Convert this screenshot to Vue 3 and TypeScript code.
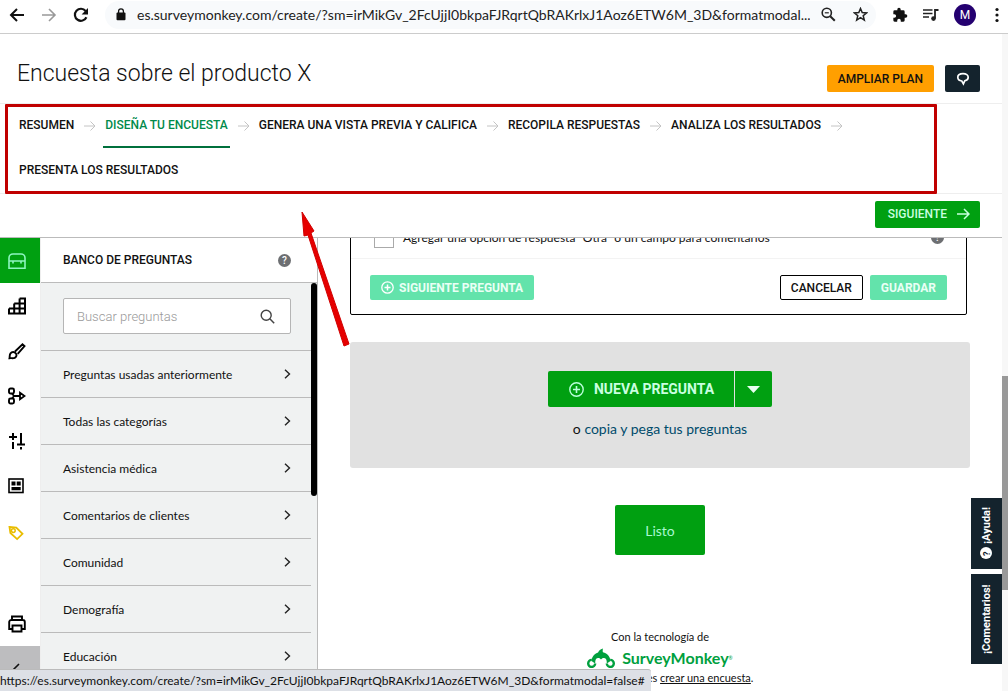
<script setup lang="ts">
import { ref } from 'vue'

interface Step {
  label: string
  active?: boolean
}

const url = 'es.surveymonkey.com/create/?sm=irMikGv_2FcUjjI0bkpaFJRqrtQbRAKrlxJ1Aoz6ETW6M_3D&formatmodal...'
const statusUrl =
  'https://es.surveymonkey.com/create/?sm=irMikGv_2FcUjjI0bkpaFJRqrtQbRAKrlxJ1Aoz6ETW6M_3D&formatmodal=false#'

const steps: Step[] = [
  { label: 'RESUMEN' },
  { label: 'DISEÑA TU ENCUESTA', active: true },
  { label: 'GENERA UNA VISTA PREVIA Y CALIFICA' },
  { label: 'RECOPILA RESPUESTAS' },
  { label: 'ANALIZA LOS RESULTADOS' },
  { label: 'PRESENTA LOS RESULTADOS' },
]

const categories: string[] = [
  'Preguntas usadas anteriormente',
  'Todas las categorías',
  'Asistencia médica',
  'Comentarios de clientes',
  'Comunidad',
  'Demografía',
  'Educación',
]

const search = ref('')
const other = ref(false)
</script>

<template>
  <div class="window">
    <header class="browser">
      <button class="icon-btn" aria-label="Atrás">
        <svg width="16" height="16" viewBox="0 0 16 16"><path d="M15 8H2M8 2L2 8l6 6" fill="none" stroke="#111" stroke-width="2" /></svg>
      </button>
      <button class="icon-btn" aria-label="Adelante">
        <svg width="16" height="16" viewBox="0 0 16 16"><path d="M1 8h13M8 2l6 6-6 6" fill="none" stroke="#999" stroke-width="1.6" /></svg>
      </button>
      <button class="icon-btn" aria-label="Recargar">
        <svg width="16" height="16" viewBox="0 0 16 16">
          <path d="M13.4 10.2A6 6 0 1 1 12.6 4" fill="none" stroke="#111" stroke-width="2.2" />
          <path d="M15 1v6.4H8.6z" fill="#111" />
        </svg>
      </button>
      <div class="address">
        <svg width="10" height="13" viewBox="0 0 10 13">
          <rect x="0.5" y="4.6" width="9" height="7.6" rx="1" fill="#111" />
          <path d="M2.6 5V3.2a2.4 2.4 0 0 1 4.8 0V5" fill="none" stroke="#111" stroke-width="1.3" />
        </svg>
        <span class="url">{{ url }}</span>
        <svg class="zoom" width="15" height="15" viewBox="0 0 15 15">
          <circle cx="5.8" cy="5.8" r="4.6" fill="none" stroke="#222" stroke-width="1.6" />
          <path d="M9.2 9.2l4.6 4.6" stroke="#222" stroke-width="2" />
          <path d="M3.8 5.8h4" stroke="#222" stroke-width="1.2" />
        </svg>
        <svg class="star" width="15" height="15" viewBox="0 0 15 15">
          <path d="M7.5 1.5l1.7 4.1 4.4.3-3.4 2.9 1.1 4.3-3.8-2.4-3.8 2.4 1.1-4.3L1.4 5.9l4.4-.3z" fill="none" stroke="#222" stroke-width="1.5" />
        </svg>
      </div>
      <div class="tools">
        <svg width="16" height="16" viewBox="0 0 24 24">
          <path d="M20.5 11H19V7a2 2 0 0 0-2-2h-4V3.500a2.500 2.500 0 0 0-5 0V5H4a2 2 0 0 0-2 2v3.800h1.500a2.700 2.700 0 0 1 0 5.400H2V20a2 2 0 0 0 2 2h3.800v-1.500a2.700 2.700 0 0 1 5.400 0V22H17a2 2 0 0 0 2-2v-4h1.500a2.500 2.500 0 0 0 0-5z" fill="#111" />
        </svg>
        <svg width="16" height="14" viewBox="0 0 16 14">
          <path d="M0 2h9.500M0 5.500h9.500M0 9h6" stroke="#222" stroke-width="1.6" />
          <path d="M12 10.500V2h3.500" fill="none" stroke="#222" stroke-width="1.8" />
          <circle cx="10.500" cy="10.600" r="2.300" fill="#222" />
        </svg>
        <span class="avatar">M</span>
        <svg class="dots" width="4" height="16" viewBox="0 0 4 16"><g fill="#111"><circle cx="2" cy="2.500" r="1.600" /><circle cx="2" cy="8" r="1.600" /><circle cx="2" cy="13.500" r="1.600" /></g></svg>
      </div>
    </header>

    <div class="page">
      <div class="app">
        <div class="title-row">
          <h1>Encuesta sobre el producto X</h1>
          <div class="title-actions">
            <button class="upgrade">AMPLIAR PLAN</button>
            <button class="chat" aria-label="Comentarios">
              <svg width="14" height="14" viewBox="0 0 14 14">
                <path d="M7 1.600c-3.200 0-5.200 1.400-5.200 3.700 0 2.200 1.800 3.500 4 3.700l1.600 2.800 1.300-2.900c2.100-.4 3.500-1.600 3.500-3.600 0-2.300-2-3.700-5.200-3.700z" fill="none" stroke="#fff" stroke-width="1.700" />
              </svg>
            </button>
          </div>
        </div>

        <nav class="steps">
          <template v-for="(step, i) in steps" :key="step.label">
            <a href="#" class="step" :class="{ active: step.active }">{{ step.label }}</a>
            <svg v-if="i < steps.length - 1" class="step-arrow" width="12" height="10" viewBox="0 0 12 10">
              <path d="M0 5h11M6.500 0.500L11 5 6.500 9.500" fill="none" stroke="#c4c4c4" stroke-width="1" />
            </svg>
          </template>
        </nav>

        <div class="next-row">
          <button class="next">
            SIGUIENTE
            <svg width="13" height="12" viewBox="0 0 13 12"><path d="M0 6h12M7 1l5 5-5 5" fill="none" stroke="#c9ffe0" stroke-width="1.500" /></svg>
          </button>
        </div>

        <div class="workspace">
          <aside class="rail">
            <button class="rail-item on" aria-label="Banco de preguntas">
              <svg width="18" height="18" viewBox="0 0 18 18"><path d="M1 16.200V6a4 4 0 0 1 4-4h8a4 4 0 0 1 4 4v10.200zM1 9h16M5 9v2.500M13 9v2.500" fill="none" stroke="#8df5c0" stroke-width="1.600" /></svg>
            </button>
            <button class="rail-item" aria-label="Generador">
              <svg width="18" height="18" viewBox="0 0 18 18"><path d="M1 11.500h16M6.200 6.500H17M11.600 1.500H17v15H1v-5M6.200 16.500v-10M11.600 16.500v-15" fill="none" stroke="#000" stroke-width="2" /></svg>
            </button>
            <button class="rail-item" aria-label="Apariencia">
              <svg width="18" height="18" viewBox="0 0 18 18">
                <path d="M7 9.500l7.500-7.300 2 1.800-6.800 7.800M1.500 16.200c.4-1.600-.2-3.400 1-4.900 1.300-1.700 4-1.700 5.300 0 1.300 1.500.8 3.600-1 4.500-1.400.7-3.400.2-5.300.4z" fill="none" stroke="#000" stroke-width="1.900" />
              </svg>
            </button>
            <button class="rail-item" aria-label="Lógica">
              <svg width="18" height="18" viewBox="0 0 18 18">
                <rect x="1" y="1.500" width="5" height="5" rx="1.500" fill="none" stroke="#000" stroke-width="1.900" />
                <rect x="1" y="11.500" width="5" height="5" rx="1.500" fill="none" stroke="#000" stroke-width="1.900" />
                <path d="M4 6.500L6 9l-2 2.500M6 9h6M12 5.800L16.500 9 12 12.200z" fill="none" stroke="#000" stroke-width="1.800" />
              </svg>
            </button>
            <button class="rail-item" aria-label="Opciones">
              <svg width="18" height="18" viewBox="0 0 18 18"><path d="M5 1v7M1 5h8M5 10v7M13 1v12M9 12.500h8M13 15v2.500" fill="none" stroke="#000" stroke-width="2" /></svg>
            </button>
            <button class="rail-item" aria-label="Formato">
              <svg width="16" height="16" viewBox="0 0 16 16">
                <rect x="1" y="1" width="14" height="13.500" fill="none" stroke="#000" stroke-width="1.600" />
                <path d="M3.500 3.500h4v4h-4zM8.700 3.500h4v4h-4zM3.500 9h9.200v3.200H3.500z" fill="#000" />
              </svg>
            </button>
            <button class="rail-item tag" aria-label="Etiquetas">
              <svg width="16" height="16" viewBox="0 0 16 16">
                <path d="M1.500 2l6.800.6 6.200 6.200-5.400 5.300L2.400 8z" fill="none" stroke="#e9bd00" stroke-width="1.800" />
                <circle cx="5.300" cy="5.600" r="1.900" fill="none" stroke="#e9bd00" stroke-width="1.500" />
              </svg>
            </button>
            <div class="rail-foot">
              <button class="rail-item" aria-label="Imprimir">
                <svg width="18" height="18" viewBox="0 0 18 18">
                  <path d="M4 5V1.500h10V5M4 14H1.200V7a2 2 0 0 1 2-2h11.600a2 2 0 0 1 2 2v7H14M4.500 10.500h9v6h-9z" fill="none" stroke="#000" stroke-width="1.900" />
                </svg>
              </button>
              <button class="rail-item collapse" aria-label="Contraer">
                <svg width="8" height="12" viewBox="0 0 8 12"><path d="M7 1L2 6l5 5" fill="none" stroke="#111" stroke-width="1.600" /></svg>
              </button>
            </div>
          </aside>

          <section class="bank">
            <div class="bank-head">
              <h2>BANCO DE PREGUNTAS</h2>
              <span class="help">?</span>
            </div>
            <div class="bank-scroll">
              <div class="bank-body">
                <div class="search-wrap">
                  <label class="search">
                    <input v-model="search" type="text" placeholder="Buscar preguntas" aria-label="Buscar preguntas" />
                    <svg width="15" height="15" viewBox="0 0 15 15">
                      <circle cx="6.200" cy="6.200" r="5" fill="none" stroke="#444" stroke-width="1.400" />
                      <path d="M9.800 9.800l4.400 4.400" stroke="#444" stroke-width="1.500" />
                    </svg>
                  </label>
                </div>
                <button v-for="c in categories" :key="c" class="category">
                  <span>{{ c }}</span>
                  <svg width="7" height="10" viewBox="0 0 7 10"><path d="M1 0.700L5.500 5 1 9.300" fill="none" stroke="#222" stroke-width="1.400" /></svg>
                </button>
              </div>
              <div class="bank-track"><div class="bank-thumb"></div></div>
            </div>
          </section>

          <main class="canvas">
            <section class="editor">
              <div class="option">
                <input id="other" v-model="other" type="checkbox" />
                <label for="other">Agregar una opción de respuesta "Otra" o un campo para comentarios</label>
                <span class="help">?</span>
              </div>
              <div class="editor-actions">
                <button class="mint next-question">
                  <svg width="13" height="13" viewBox="0 0 13 13"><circle cx="6.500" cy="6.500" r="5.700" fill="none" stroke="#fff" stroke-width="1.300" /><path d="M6.500 3.500v6M3.500 6.500h6" stroke="#fff" stroke-width="1.500" /></svg>
                  SIGUIENTE PREGUNTA
                </button>
                <button class="cancel">CANCELAR</button>
                <button class="mint save">GUARDAR</button>
              </div>
            </section>

            <section class="adder">
              <div class="split">
                <button class="new-question">
                  <svg width="15" height="15" viewBox="0 0 15 15"><circle cx="7.500" cy="7.500" r="6.700" fill="none" stroke="#b9ffdc" stroke-width="1.400" /><path d="M7.500 4v7M4 7.500h7" stroke="#b9ffdc" stroke-width="1.600" /></svg>
                  NUEVA PREGUNTA
                </button>
                <button class="more" aria-label="Más tipos de pregunta">
                  <svg width="13" height="7" viewBox="0 0 13 7"><path d="M0 0h13L6.500 7z" fill="#e8fff2" /></svg>
                </button>
              </div>
              <p>o <a href="#">copia y pega tus preguntas</a></p>
            </section>

            <button class="done">Listo</button>

            <footer class="powered">
              <span>Con la tecnología de</span>
              <div class="brand">
                <svg width="28" height="20" viewBox="0 0 28 20">
                  <path d="M4.500 13C5 7.500 9 4 14 4s9 3.500 9.500 9l-3.700 2.500c.2-3.700-1-5.500-3-5.500-1.300 0-2.200.6-2.800 1.600C13.400 10.600 12.500 10 11.200 10c-2 0-3.200 1.800-3 5.500z" fill="#00a03e" />
                  <path d="M8.200 15.500a3.500 3.500 0 1 1-3.400-3.600M19.800 15.500a3.500 3.500 0 1 0 3.400-3.600" fill="none" stroke="#00a03e" stroke-width="2.400" />
                  <path d="M11 5c.6-2.400 2-3.600 5-4.500-.4 1.400-.4 2.600 0 4.500z" fill="#00a03e" />
                </svg>
                <strong>SurveyMonkey</strong><sup>®</sup>
              </div>
              <span>Mira lo fácil que es <a href="#">crear una encuesta</a>.</span>
            </footer>
          </main>
        </div>

        <div class="side-tabs">
          <button class="side-tab"><span class="tab-help">?</span>¡Ayuda!</button>
          <button class="side-tab feedback">¡Comentarios!</button>
        </div>
      </div>
      <div class="scrollbar"><div class="thumb"></div></div>
    </div>

    <div class="status">{{ statusUrl }}</div>

    <div class="highlight"></div>
    <svg class="pointer" width="52" height="138" viewBox="0 0 52 138">
      <path d="M2 1l12 19-3 2 38 111-5 2L8 24l-4 1z" fill="#e60000" stroke="#d00000" stroke-width="1" />
    </svg>
  </div>
</template>

<style>
html,
body {
  height: 100%;
}
body {
  margin: 0;
  overflow: hidden;
}
</style>

<style scoped>
* {
  box-sizing: border-box;
}
button {
  font-family: inherit;
  margin: 0;
  padding: 0;
  border: 0;
  background: none;
  color: inherit;
  cursor: pointer;
}
svg {
  display: block;
  flex: none;
}
h1,
h2,
p {
  margin: 0;
}
.window {
  position: relative;
  display: flex;
  flex-direction: column;
  height: 100vh;
  overflow: hidden;
  background: #fff;
  color: #111;
  font-family: Roboto, "Liberation Sans", sans-serif;
  font-size: 12px;
}

/* Browser bar */
.browser {
  flex: none;
  display: flex;
  align-items: center;
  gap: 16px;
  height: 34px;
  padding: 0 9px 4px;
  border-bottom: 1px solid #ccc;
}
.address {
  flex: 1;
  min-width: 0;
  display: flex;
  align-items: center;
  height: 28px;
  gap: 11px;
  padding: 0 8px 0 11px;
  border-radius: 14px;
  background: #f8fafc;
}
.star {
  margin-left: 6px;
}
.url {
  flex: 1;
  min-width: 0;
  overflow: hidden;
  white-space: nowrap;
  font: 14px/20px Lato, "Open Sans", sans-serif;
  color: #222;
}
.tools {
  display: flex;
  align-items: center;
  gap: 15px;
}
.avatar {
  width: 22px;
  height: 22px;
  border-radius: 50%;
  background: #240070;
  color: #fff;
  font-size: 12px;
  line-height: 22px;
  text-align: center;
}
.dots {
  margin-left: 4px;
}

/* Page */
.page {
  flex: 1;
  min-height: 0;
  display: flex;
}
.app {
  position: relative;
  flex: 1;
  min-width: 0;
  display: flex;
  flex-direction: column;
}
.scrollbar {
  flex: none;
  width: 6px;
  padding-top: 342px;
  background: #f7f7f7;
}
.thumb {
  height: 214px;
  background: #999;
}
.title-row {
  flex: none;
  display: flex;
  align-items: center;
  justify-content: space-between;
  height: 70px;
  padding: 20px 22px 0 17px;
  border-bottom: 1px solid #eee;
}
.title-row h1 {
  padding-bottom: 10px;
  font-size: 23px;
  line-height: 28px;
  font-weight: 300;
}
.title-actions {
  display: flex;
  gap: 11px;
}
.upgrade {
  height: 27px;
  padding: 0 11px;
  border-radius: 2px;
  background: #ff9f00;
  font-size: 12px;
  font-weight: 500;
}
.chat {
  display: grid;
  place-items: center;
  width: 35px;
  height: 27px;
  border-radius: 2px;
  background: #14232d;
}
.steps {
  flex: none;
  display: flex;
  flex-wrap: wrap;
  align-items: center;
  row-gap: 1px;
  padding: 0 72px 0 17px;
  border-bottom: 1px solid #eee;
}
.step {
  height: 44px;
  padding: 0 2px;
  color: #111;
  font-size: 12px;
  line-height: 43px;
  font-weight: 500;
  text-decoration: none;
}
.step.active {
  color: #008a4b;
  border-bottom: 2px solid #00703c;
}
.step-arrow {
  margin: 0 7px 0 8px;
}
.next-row {
  flex: none;
  display: flex;
  justify-content: flex-end;
  align-items: center;
  height: 44px;
  padding: 0 22px 3px 0;
  border-bottom: 1px solid #bbb;
}
.next {
  display: flex;
  align-items: center;
  gap: 10px;
  height: 27px;
  padding: 0 10px 0 13px;
  border-radius: 2px;
  background: #00a011;
  color: #c9ffe0;
  font-size: 12px;
  font-weight: 500;
}

/* Workspace */
.workspace {
  flex: 1;
  min-height: 0;
  display: flex;
}
.rail {
  flex: none;
  display: flex;
  flex-direction: column;
  width: 41px;
  border-right: 1px solid #eee;
}
.rail-item {
  flex: none;
  display: flex;
  align-items: center;
  width: 40px;
  height: 45px;
  padding-left: 8px;
}
.rail-item.on {
  background: #00a011;
}
.rail-item.tag {
  height: 50px;
}
.rail-foot {
  margin-top: auto;
}
.rail-item.collapse {
  padding-left: 12px;
  background: #bdbdbf;
}
.bank {
  flex: none;
  display: flex;
  flex-direction: column;
  width: 277px;
  border-right: 1px solid #bbb;
}
.bank-head {
  flex: none;
  display: flex;
  align-items: center;
  justify-content: space-between;
  height: 45px;
  padding: 0 26px 0 22px;
  border-bottom: 1px solid #bbb;
}
.bank-head h2 {
  font-size: 12px;
  font-weight: 500;
}
.help {
  width: 13px;
  height: 13px;
  border-radius: 50%;
  background: #6d6f72;
  color: #fff;
  font-size: 10px;
  line-height: 13px;
  font-weight: 500;
  text-align: center;
}
.bank-scroll {
  flex: 1;
  min-height: 0;
  display: flex;
  overflow: hidden;
  background: #f0f2f2;
}
.bank-body {
  flex: 1;
}
.bank-track {
  width: 6px;
}
.bank-thumb {
  height: 213px;
  border-radius: 3px;
  background: #000;
}
.search-wrap {
  padding: 15px 20px 16px 22px;
  border-bottom: 1px solid #bbb;
}
.search {
  display: flex;
  align-items: center;
  height: 36px;
  padding: 0 15px 0 13px;
  border: 1px solid #b5b5b5;
  border-radius: 2px;
  background: #fff;
}
.search input {
  flex: 1;
  min-width: 0;
  padding: 0;
  border: 0;
  outline: 0;
  font-family: inherit;
  font-size: 13px;
  font-weight: 300;
}
.search input::placeholder {
  color: #999;
}
.category {
  display: flex;
  align-items: center;
  justify-content: space-between;
  width: 100%;
  height: 47px;
  padding: 0 20px 0 22px;
  border-bottom: 1px solid #bbb;
  font-family: Lato, Roboto, sans-serif;
  font-size: 12px;
  text-align: left;
}

/* Canvas */
.canvas {
  flex: 1;
  min-width: 0;
  display: flex;
  flex-direction: column;
  align-items: stretch;
  overflow: hidden;
  padding: 0 32px;
  font-family: Lato, Roboto, sans-serif;
}
.editor {
  margin: -22px 3px 0 0;
  border: 1px solid #000;
  border-radius: 2px;
}
.option {
  display: flex;
  align-items: center;
  height: 42px;
  padding: 0 22px 0 23px;
  border-bottom: 1px solid #f3f3f3;
}
.option input {
  appearance: none;
  width: 20px;
  height: 20px;
  margin: 0 9px 0 0;
  border: 1px solid #aaa;
  background: #fff;
}
.option label {
  flex: 1;
  font-size: 12px;
}
.editor-actions {
  display: flex;
  align-items: center;
  gap: 7px;
  padding: 16px 19px 14px;
  font-family: Roboto, sans-serif;
}
.editor-actions button {
  display: flex;
  align-items: center;
  gap: 5px;
  height: 25px;
  border-radius: 2px;
  font-size: 12px;
  font-weight: 500;
}
.editor-actions .mint {
  padding: 0 11px;
  background: #63e3ab;
  color: #eafff5;
  font-weight: 700;
}
.editor-actions .cancel {
  margin-left: auto;
  padding: 0 10px;
  border: 1px solid #000;
}
.adder {
  display: flex;
  flex-direction: column;
  align-items: center;
  gap: 12px;
  margin-top: 27px;
  padding: 29px 0;
  border-radius: 3px;
  background: #e1e1e1;
}
.split {
  display: flex;
  gap: 1px;
  font-family: Roboto, sans-serif;
}
.split button {
  display: flex;
  align-items: center;
  gap: 10px;
  height: 36px;
  background: #00a011;
  color: #c9ffe0;
  font-size: 14px;
  font-weight: 700;
}
.split .new-question {
  padding: 0 20px 0 21px;
  border-radius: 2px 0 0 2px;
}
.split .more {
  padding: 0 12px;
  border-radius: 0 2px 2px 0;
}
.adder p {
  font-size: 14px;
  line-height: 20px;
}
.adder a {
  color: #004b6b;
  text-decoration: none;
}
.done {
  align-self: center;
  width: 90px;
  height: 50px;
  margin-top: 37px;
  border-radius: 2px;
  background: #00a011;
  color: #a8f8d0;
  font-size: 14px;
}
.powered {
  display: flex;
  flex-direction: column;
  align-items: center;
  margin-top: 74px;
  font-size: 11px;
  line-height: 16px;
  white-space: nowrap;
}
.powered a {
  color: #111;
}
.brand {
  display: flex;
  align-items: center;
  height: 25px;
  color: #00a03e;
}
.brand strong {
  margin-left: 7px;
  font-size: 16px;
  font-weight: 700;
}
.brand sup {
  font-size: 5px;
}

/* Floating elements */
.side-tabs {
  position: absolute;
  right: 0;
  top: 464px;
  display: flex;
  flex-direction: column;
  gap: 5px;
}
.side-tab {
  display: flex;
  align-items: center;
  justify-content: center;
  gap: 3px;
  width: 31px;
  height: 71px;
  background: #14232d;
  color: #fff;
  font-size: 11px;
  font-weight: 700;
  writing-mode: vertical-rl;
  transform: rotate(180deg);
}
.side-tab.feedback {
  height: 90px;
}
.tab-help {
  width: 12px;
  height: 12px;
  border-radius: 50%;
  background: #fff;
  color: #14232d;
  font-size: 9px;
  line-height: 12px;
  text-align: center;
}
.status {
  position: absolute;
  left: 0;
  bottom: 0;
  height: 22px;
  padding: 0 6px 0 0;
  border-top: 1px solid #bbb;
  border-radius: 0 3px 0 0;
  background: #dde0e6;
  font: 12px/21px Lato, "Open Sans", sans-serif;
  white-space: nowrap;
}
.highlight {
  position: absolute;
  left: 5px;
  top: 104px;
  right: 71px;
  height: 90px;
  border: 3px solid #c00000;
  border-radius: 1px;
  pointer-events: none;
}
.pointer {
  position: absolute;
  left: 300px;
  top: 211px;
  pointer-events: none;
}
</style>
